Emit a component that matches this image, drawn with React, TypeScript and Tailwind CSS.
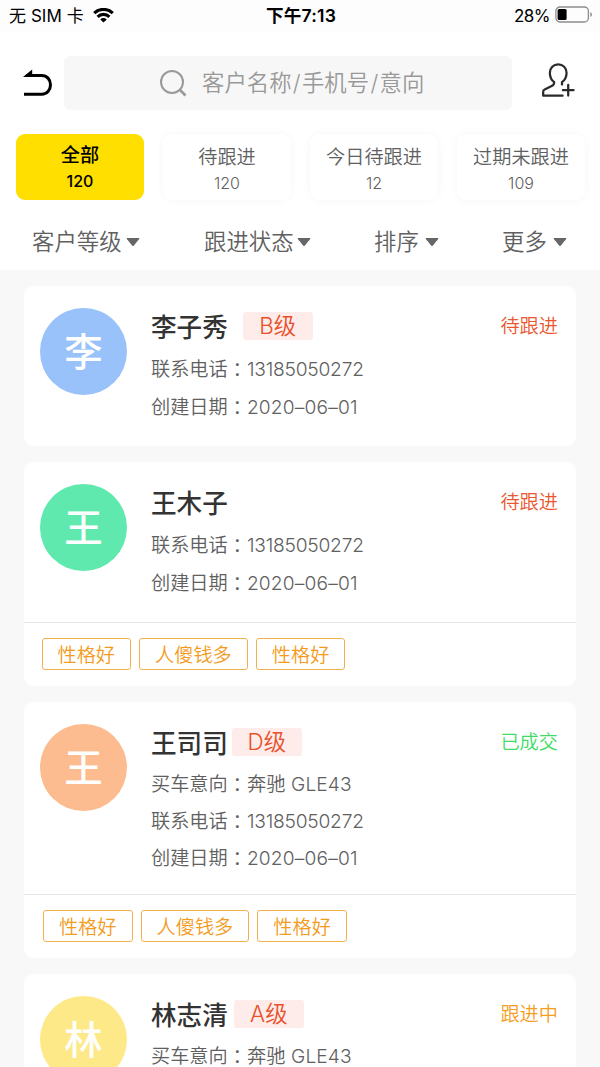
import React from "react";

interface Customer {
  name: string;
  avatarColor: string;
  level?: string;
  levelGap?: string;
  status: string;
  statusColor: string;
  rows: { label: string; value: string; valueClass?: string }[];
  compact?: boolean;
  tags?: string[];
  tagPadding?: string;
}

const PHONE = { label: "联系电话", value: "13185050272", valueClass: "tracking-[-0.22px]" };
const CREATED = { label: "创建日期", value: "2020–06–01", valueClass: "tracking-[0.15px]" };
const INTENT = { label: "买车意向", value: "奔驰 GLE43", valueClass: "tracking-[0.1px]" };
const TAGS = ["性格好", "人傻钱多", "性格好"];

const customers: Customer[] = [
  {
    name: "李子秀",
    avatarColor: "bg-[#99c2fa]",
    level: "B级",
    levelGap: "ml-[15px]",
    status: "待跟进",
    statusColor: "text-[#e9562f]",
    rows: [PHONE, CREATED],
  },
  {
    name: "王木子",
    avatarColor: "bg-[#60e9ae]",
    status: "待跟进",
    statusColor: "text-[#e9562f]",
    rows: [PHONE, CREATED],
    tags: TAGS,
    tagPadding: "pl-[17.5px]",
  },
  {
    name: "王司司",
    avatarColor: "bg-[#fcbc90]",
    level: "D级",
    levelGap: "ml-[4px]",
    status: "已成交",
    statusColor: "text-[#3fdd68]",
    rows: [INTENT, PHONE, CREATED],
    compact: true,
    tags: TAGS,
    tagPadding: "pl-[19px]",
  },
  {
    name: "林志清",
    avatarColor: "bg-[#fee989]",
    level: "A级",
    levelGap: "ml-[6px]",
    status: "跟进中",
    statusColor: "text-[#f59d22]",
    rows: [INTENT],
    compact: true,
  },
];

const tabs = [
  { label: "全部", count: 120 },
  { label: "待跟进", count: 120 },
  { label: "今日待跟进", count: 12 },
  { label: "过期未跟进", count: 109 },
];

const StatusBar = () => (
  <div className="grid h-8 shrink-0 grid-cols-3 items-center bg-[#fdfdfd] pr-[7px] pl-[9px] text-[17px] leading-8 text-black">
    <div className="flex items-center gap-[9px]">
      <span className="tracking-[0.05px] whitespace-pre">无 SIM 卡</span>
      <svg width="21" height="15" viewBox="0 0 21 15" className="-mt-[2px]" fill="none" stroke="currentColor" strokeWidth="3.1">
        <path d="M1.2 5.2a13.2 13.2 0 0 1 18.6 0" />
        <path d="M4.6 8.8a8.4 8.4 0 0 1 11.8 0" />
        <path d="M10.5 14.6 7.3 11.4a4.6 4.6 0 0 1 6.4 0z" fill="currentColor" stroke="none" />
      </svg>
    </div>
    <span className="text-center text-[17.6px] font-semibold tracking-[0.2px]">下午7:13</span>
    <div className="flex items-center justify-end gap-[5px]">
      <span className="tracking-[-0.5px]">28%</span>
      <svg width="38" height="17" viewBox="0 0 38 17" className="-mt-[3px]" fill="none">
        <rect x="0.9" y="1" width="32.5" height="15" rx="4" stroke="#8c8c8c" strokeWidth="1.3" />
        <rect x="2.6" y="3" width="9" height="11" rx="1.5" fill="#000" />
        <path d="M35.3 6.2c2.2.6 2.2 4 0 4.6z" fill="#8c8c8c" />
      </svg>
    </div>
  </div>
);

const SearchHeader = () => (
  <div className="mt-6 flex h-[54px] items-center">
    <button className="ml-[23px] flex w-[41px]">
      <svg width="30" height="28" viewBox="0 0 30 28" className="-mt-px" fill="none" stroke="#000" strokeWidth="3">
        <path d="M1 25.2h17.8c5 0 8.7-4 8.7-9.4s-3.7-9.3-8.7-9.3H3" />
        <path d="M0 8 9.2 0.6V8z" fill="#000" stroke="none" />
      </svg>
    </button>
    <div className="flex h-[54px] w-[448px] items-center rounded-md bg-[#f7f7f7] pl-[96px] text-[22.4px] font-[350] text-[#999]">
      <svg width="27" height="27" viewBox="0 0 27 27" fill="none" stroke="#999" strokeWidth="2">
        <circle cx="12" cy="12" r="11" />
        <path d="m20 20 5.5 5.5" strokeWidth="2.6" />
      </svg>
      <span className="ml-[15px] whitespace-nowrap">
        客户名称<span className="px-[1.3px]">/</span>手机号<span className="px-[1.3px]">/</span>意向
      </span>
    </div>
    <button className="ml-[30px]">
      <svg width="33" height="35" viewBox="0 0 34 36" className="-mt-[5px]" fill="none" stroke="#2b2b2b" strokeWidth="2.3" strokeLinecap="round" strokeLinejoin="round">
        <path d="M20.6 22.2v-2.5c2.6-2 4.7-5.3 4.7-9.5 0-5.2-3.7-8.7-8.6-8.7s-8.6 3.5-8.6 8.7c0 4.2 1.9 7.5 4.4 9.5.2 2.5-.6 3.2-2.6 4L2.7 27.3c-1.1.4-1.5 1.3-1.5 2.6v3.8h20" />
        <path d="M21.5 28h11M27 22.5v11" />
      </svg>
    </button>
  </div>
);

const Caret = ({ className }: { className: string }) => (
  <svg className={className} width="14" height="10" viewBox="0 0 14 10" fill="#666">
    <path d="M1.2 1h11.6q1 0 .4.9L7.9 8.6q-.9 1-1.8 0L.8 1.9Q.2 1 1.2 1z" />
  </svg>
);

const FilterBar = () => (
  <div className="mt-[20px] flex h-[44px] pl-8 text-[22.4px] leading-[44px] font-[350] whitespace-nowrap text-[#606060]">
    <div className="flex w-[172px] items-center">
      客户等级
      <Caret className="ml-[4.5px]" />
    </div>
    <div className="flex w-[170px] items-center">
      跟进状态
      <Caret className="ml-[3px]" />
    </div>
    <div className="flex w-[128px] items-center">
      排序
      <Caret className="ml-[6px]" />
    </div>
    <div className="flex items-center">
      更多
      <Caret className="ml-[6px]" />
    </div>
  </div>
);

const CustomerCard = ({ customer }: { customer: Customer }) => (
  <div className="shrink-0 rounded-[10px] bg-white">
    <div className={`flex pl-4 ${customer.compact ? "h-48" : "h-40"}`}>
      <div
        className={`mt-[22px] flex size-[87px] shrink-0 items-center justify-center rounded-full pt-[3px] text-[38.4px] font-medium text-white ${customer.avatarColor}`}
      >
        {customer.name[0]}
      </div>
      <div className="ml-6 flex-1 pt-6">
        <div className="flex h-8 items-center">
          <span className="pt-1 text-[25.6px] leading-8 font-medium text-[#333]">{customer.name}</span>
          {customer.level && (
            <span
              className={`flex h-[28px] w-[70px] items-center justify-center rounded-[3px] bg-[#fdecea] text-[22.4px] leading-7 font-[350] text-[#e9502a] ${customer.levelGap}`}
            >
              {customer.level}
            </span>
          )}
          <span className={`mr-[18px] ml-auto text-[19.2px] font-[350] ${customer.statusColor}`}>{customer.status}</span>
        </div>
        <div className="mt-[8px]">
          {customer.rows.map((row) => (
            <div
              key={row.label}
              className={`flex items-center text-[19.2px] font-[350] text-[#606060] ${
                customer.compact ? "h-[36.8px]" : "h-[38.5px]"
              }`}
            >
              <span>{row.label}</span>
              <span className="font-['Noto_Sans_CJK_TC',sans-serif]" lang="zh-TW">：</span>
              <span className={row.valueClass}>{row.value}</span>
            </div>
          ))}
        </div>
      </div>
    </div>
    {customer.tags && (
      <div className={`flex h-16 gap-[8px] border-t border-[#e6e6e6] pt-[15px] ${customer.tagPadding}`}>
        {customer.tags.map((tag, i) => (
          <span
            key={i}
            className="flex h-8 items-center rounded-[3px] border border-[#f3b04f] px-[15px] pt-[3px] text-[19.2px] leading-none font-[350] text-[#f39b1d]"
          >
            {tag}
          </span>
        ))}
      </div>
    )}
  </div>
);

const App: React.FC = () => {
  return (
    <div
      lang="zh-CN"
      className="flex h-[1067px] w-[600px] flex-col overflow-hidden bg-[#f8f8f8] font-['Inter','Noto_Sans_CJK_SC',sans-serif]"
    >
      <header className="h-[270px] shrink-0 bg-white">
        <StatusBar />
        <SearchHeader />
        <div className="mt-6 flex gap-[19px] pl-4">
          {tabs.map((tab, i) => (
            <div
              key={tab.label}
              className={`flex h-[66px] w-32 shrink-0 flex-col items-center rounded-[9px] ${
                i === 0
                  ? "bg-[#ffdf00] pt-[8px] font-medium text-black"
                  : "bg-white pt-[10px] font-[350] text-[#606060] shadow-[0_0_10px_rgba(0,0,0,0.04)]"
              }`}
            >
              <span className="text-[19.2px] leading-[26px]">{tab.label}</span>
              <span className="text-[16px] leading-[26px]">{tab.count}</span>
            </div>
          ))}
        </div>
        <FilterBar />
      </header>
      <main className="flex flex-col gap-4 px-6 pt-4">
        {customers.map((c) => (
          <CustomerCard key={c.name} customer={c} />
        ))}
      </main>
    </div>
  );
};

export default App;
